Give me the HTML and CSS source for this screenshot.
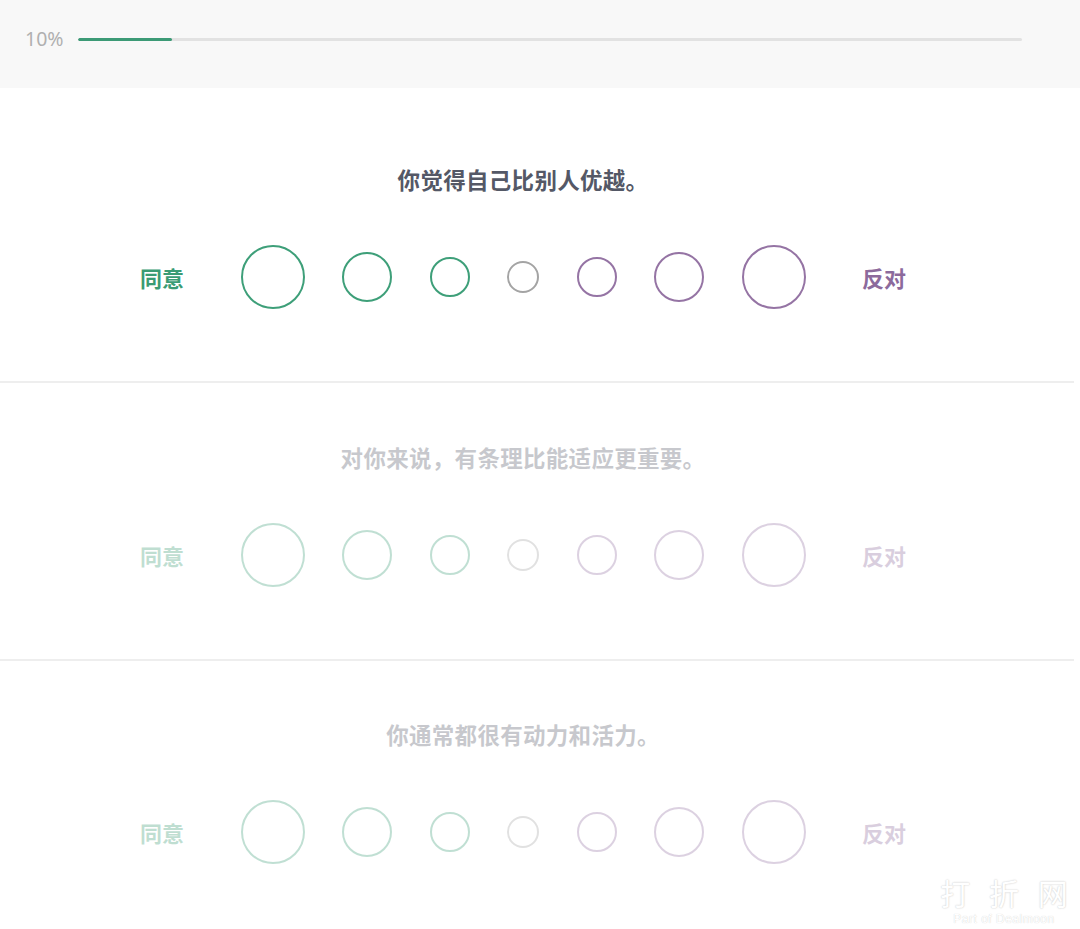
FILE: index.html
```html
<!DOCTYPE html>
<html lang="zh">
<head>
<meta charset="utf-8">
<title>测试</title>
<link rel="stylesheet" href="styles.css">
</head>
<body>
<header class="progress">
  <span class="pct">10%</span>
  <div class="track"><div class="fill" style="width:10%"></div></div>
</header>
<main class="questions">
  <section class="question active">
    <div class="inner">
      <h2 class="title">你觉得自己比别人优越。</h2>
      <div class="scale">
        <span class="label agree">同意</span>
        <div class="options">
          <span class="opt g s1"></span>
          <span class="opt g s2"></span>
          <span class="opt g s3"></span>
          <span class="opt n s4"></span>
          <span class="opt p s3"></span>
          <span class="opt p s2"></span>
          <span class="opt p s1"></span>
        </div>
        <span class="label disagree">反对</span>
      </div>
    </div>
  </section>
  <section class="question faded">
    <div class="inner">
      <h2 class="title">对你来说，有条理比能适应更重要。</h2>
      <div class="scale">
        <span class="label agree">同意</span>
        <div class="options">
          <span class="opt g s1"></span>
          <span class="opt g s2"></span>
          <span class="opt g s3"></span>
          <span class="opt n s4"></span>
          <span class="opt p s3"></span>
          <span class="opt p s2"></span>
          <span class="opt p s1"></span>
        </div>
        <span class="label disagree">反对</span>
      </div>
    </div>
  </section>
  <section class="question faded last">
    <div class="inner">
      <h2 class="title">你通常都很有动力和活力。</h2>
      <div class="scale">
        <span class="label agree">同意</span>
        <div class="options">
          <span class="opt g s1"></span>
          <span class="opt g s2"></span>
          <span class="opt g s3"></span>
          <span class="opt n s4"></span>
          <span class="opt p s3"></span>
          <span class="opt p s2"></span>
          <span class="opt p s1"></span>
        </div>
        <span class="label disagree">反对</span>
      </div>
    </div>
  </section>
</main>
<div class="watermark">
  <div class="wm-cn">打 折 网</div>
  <div class="wm-en">Part of Dealmoon</div>
</div>
</body>
</html>
```
FILE: styles.css
```css
html, body {
  margin: 0;
  padding: 0;
  background: #ffffff;
  font-family: "Noto Sans CJK SC", "Noto Sans", sans-serif;
}

body {
  position: relative;
  min-height: 929px;
  overflow: hidden;
}

.progress {
  height: 88px;
  box-sizing: border-box;
  background: #f8f8f8;
  padding: 28px 58px 0 25px;
  display: flex;
  align-items: flex-start;
}

.progress .pct {
  height: 22px;
  line-height: 22px;
  font-family: "Noto Sans", "Open Sans", sans-serif;
  font-size: 19.5px;
  color: #b0b0b0;
  margin-right: 14px;
}

.progress .track {
  flex: 1;
  height: 3px;
  margin-top: 10px;
  background: #e2e2e2;
  border-radius: 2px;
  overflow: hidden;
}

.progress .fill {
  height: 100%;
  background: #3c9a76;
  border-radius: 2px;
}

.questions {
  display: flex;
  flex-direction: column;
}

.question {
  width: 1074px;
  padding: 59px 28px 72px 0;
  box-sizing: border-box;
  border-bottom: 2px solid #eeeeee;
}

.question.active {
  padding-top: 76px;
  padding-bottom: 72px;
}

.question.last {
  padding-top: 58px;
  border-bottom: none;
}

.question.faded .inner {
  opacity: 0.32;
}

.inner {
  display: flex;
  flex-direction: column;
  align-items: center;
  gap: 51px;
}

.title {
  margin: 0;
  font-size: 22.5px;
  line-height: 30px;
  font-weight: 700;
  color: #545866;
  letter-spacing: 0.3px;
}

.scale {
  display: flex;
  align-items: center;
  gap: 56px;
  height: 64px;
}

.label {
  font-size: 22px;
  font-weight: 700;
  width: 45px;
  text-align: center;
}

.label.agree { color: #3a9b74; }
.label.disagree { color: #8c6a9c; }

.options {
  display: flex;
  align-items: center;
  gap: 37.5px;
}

.opt {
  display: block;
  box-sizing: border-box;
  border-radius: 50%;
  border: 2.5px solid #3a9b74;
}

.opt.g { border-color: #3e9f79; }
.opt.n { border-color: #a4a4a4; }
.opt.p { border-color: #9574a4; }

.opt.s1 { width: 64px; height: 64px; }
.opt.s2 { width: 50px; height: 50px; }
.opt.s3 { width: 40px; height: 40px; }
.opt.s4 { width: 32px; height: 32px; }

.watermark {
  position: absolute;
  right: 12px;
  bottom: 10px;
  width: 128px;
  display: flex;
  flex-direction: column;
  align-items: center;
  gap: 3px;
  color: #ffffff;
}

.wm-cn {
  font-size: 30px;
  line-height: 34px;
  letter-spacing: 6px;
  margin-right: -6px;
  text-shadow: 0 0 2px #d0d0d0, 0 0 1px #dcdcdc;
}

.wm-en {
  font-family: "Liberation Sans", sans-serif;
  font-size: 12px;
  line-height: 14px;
  letter-spacing: 0.5px;
  text-shadow: 0 0 1px #c8c8c8;
}
```
